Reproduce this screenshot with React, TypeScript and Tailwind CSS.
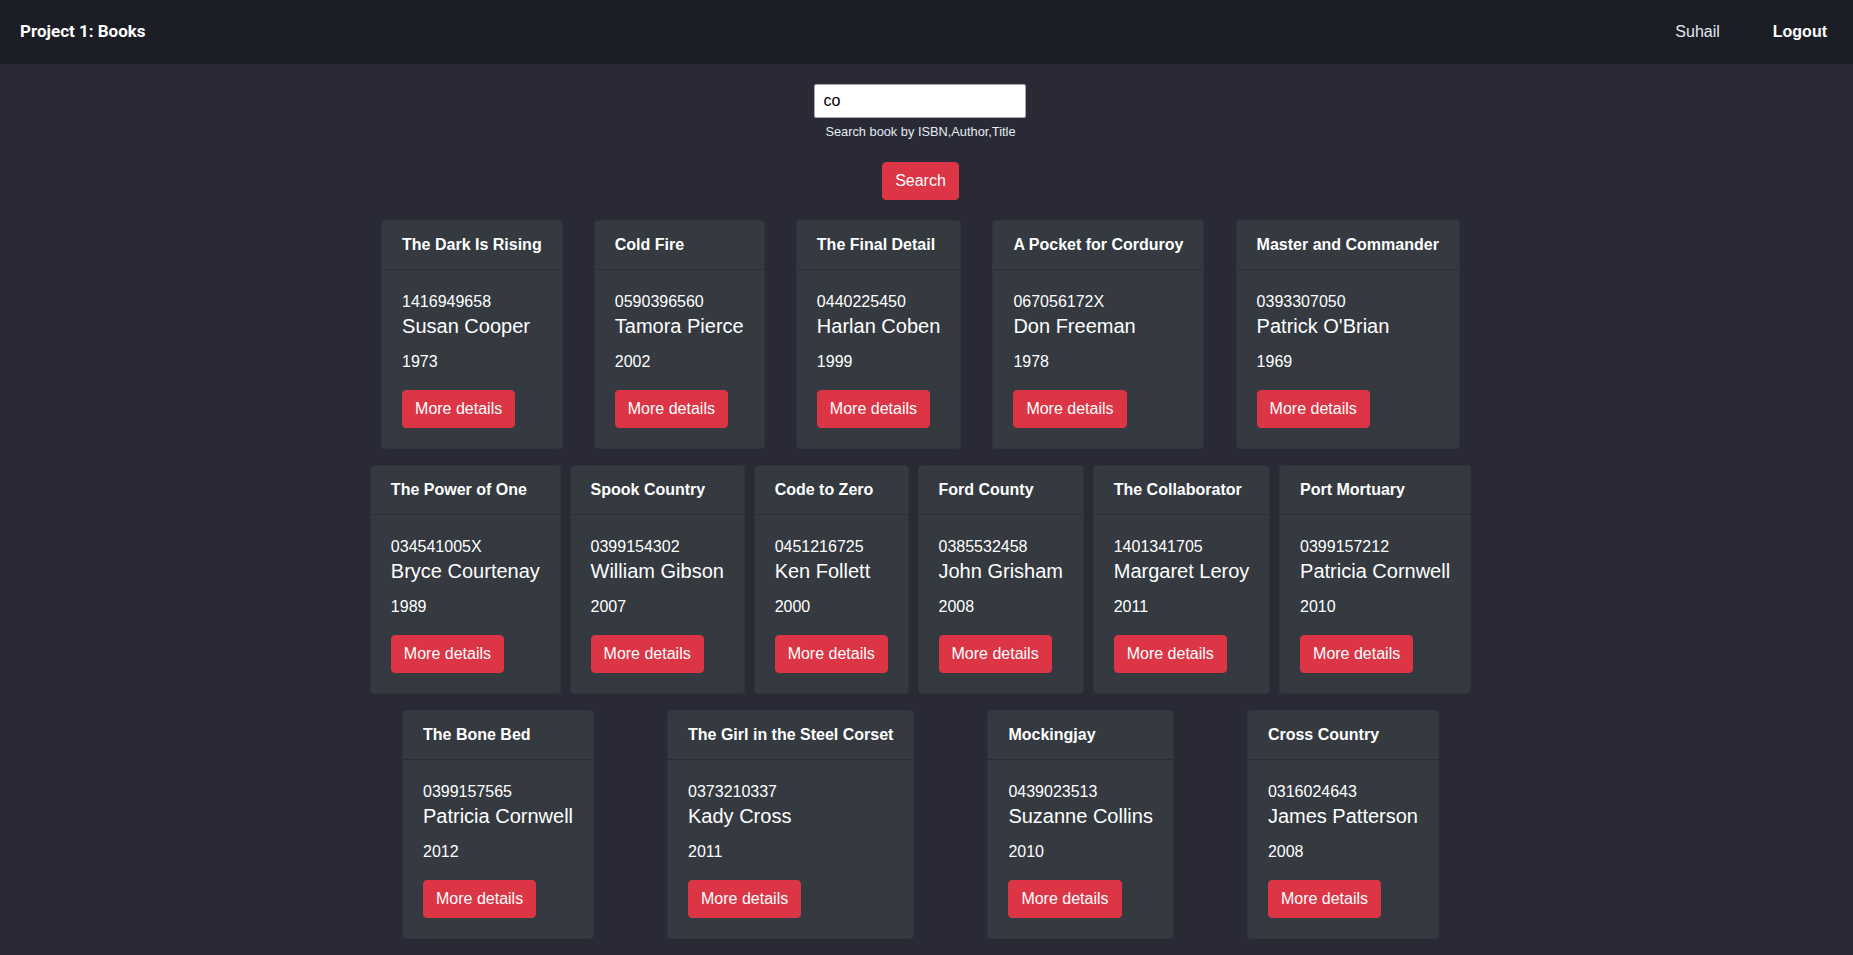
import React, { useState } from 'react';

type Book = { title: string; isbn: string; author: string; year: number };

const rows: Book[][] = [
  [
    { title: 'The Dark Is Rising', isbn: '1416949658', author: 'Susan Cooper', year: 1973 },
    { title: 'Cold Fire', isbn: '0590396560', author: 'Tamora Pierce', year: 2002 },
    { title: 'The Final Detail', isbn: '0440225450', author: 'Harlan Coben', year: 1999 },
    { title: 'A Pocket for Corduroy', isbn: '067056172X', author: 'Don Freeman', year: 1978 },
    { title: 'Master and Commander', isbn: '0393307050', author: "Patrick O'Brian", year: 1969 },
  ],
  [
    { title: 'The Power of One', isbn: '034541005X', author: 'Bryce Courtenay', year: 1989 },
    { title: 'Spook Country', isbn: '0399154302', author: 'William Gibson', year: 2007 },
    { title: 'Code to Zero', isbn: '0451216725', author: 'Ken Follett', year: 2000 },
    { title: 'Ford County', isbn: '0385532458', author: 'John Grisham', year: 2008 },
    { title: 'The Collaborator', isbn: '1401341705', author: 'Margaret Leroy', year: 2011 },
    { title: 'Port Mortuary', isbn: '0399157212', author: 'Patricia Cornwell', year: 2010 },
  ],
  [
    { title: 'The Bone Bed', isbn: '0399157565', author: 'Patricia Cornwell', year: 2012 },
    { title: 'The Girl in the Steel Corset', isbn: '0373210337', author: 'Kady Cross', year: 2011 },
    { title: 'Mockingjay', isbn: '0439023513', author: 'Suzanne Collins', year: 2010 },
    { title: 'Cross Country', isbn: '0316024643', author: 'James Patterson', year: 2008 },
  ],
];

function BookCard({ book }: { book: Book }) {
  return (
    <div className="bg-[#343a40] border border-[#30353b] rounded-[4px] text-white">
      <div className="px-5 py-3 border-b border-[#2a2e33] font-bold text-base leading-6 whitespace-nowrap">
        {book.title}
      </div>
      <div className="p-5">
        <p className="text-base leading-6">{book.isbn}</p>
        <h5 className="text-[20px] leading-6 mb-3 whitespace-nowrap">{book.author}</h5>
        <p className="text-base leading-6 mb-4">{book.year}</p>
        <button className="bg-[#dc3545] hover:bg-[#c82333] text-white text-base leading-6 px-3 py-[6px] border border-[#dc3545] rounded-[4px] whitespace-nowrap">
          More details
        </button>
      </div>
    </div>
  );
}

export default function App() {
  const [query, setQuery] = useState('co');

  return (
    <div className="min-h-screen bg-[#292a36] text-white font-['Liberation_Sans',Arial,sans-serif]">
      <nav className="h-16 bg-[#1c1e26] flex items-center justify-between pl-5 pr-[26px]">
        <span className="font-['Roboto',sans-serif] font-bold text-[17px] text-white">Project 1: Books</span>
        <div className="flex items-center gap-[53px] text-base">
          <span className="text-[#e3e8ee]">Suhail</span>
          <span className="font-bold text-white">Logout</span>
        </div>
      </nav>

      <div className="flex justify-center pr-3">
        <div className="w-[1110px] flex flex-col items-center">
          <input
            value={query}
            onChange={e => setQuery(e.target.value)}
            className="mt-5 -translate-x-px w-[212px] h-[34px] px-[9px] bg-white text-black text-base border border-[#a9a9a9] rounded-[2px] outline-none"
          />
          <small className="mt-1 text-[12.8px] leading-[19px] text-[#e6ecf2]">Search book by ISBN,Author,Title</small>
          <button className="mt-[21px] bg-[#dc3545] text-white text-base leading-6 px-3 py-[6px] border border-[#dc3545] rounded-[4px]">
            Search
          </button>

          <div className="mt-5 w-full flex flex-col gap-y-4">
            {rows.map((row, i) => (
              <div key={i} className="flex justify-around">
                {row.map(book => (
                  <BookCard key={book.isbn} book={book} />
                ))}
              </div>
            ))}
          </div>
        </div>
      </div>
    </div>
  );
}
